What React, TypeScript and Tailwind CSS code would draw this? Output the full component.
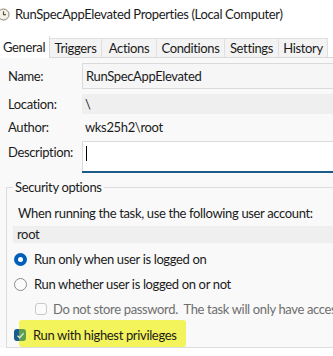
import React from 'react';

const tabs = [
  { label: 'General', w: 'w-[50px]' },
  { label: 'Triggers', w: 'w-[52px]' },
  { label: 'Actions', w: 'w-[55px]' },
  { label: 'Conditions', w: 'w-[68px]' },
  { label: 'Settings', w: 'w-[54px]' },
  { label: 'History', w: 'w-[49px]' },
];

function ClockIcon() {
  return (
    <svg width="13" height="13" viewBox="0 0 13 13" className="shrink-0">
      <circle cx="6.5" cy="6.5" r="5.5" fill="#f4f1e8" stroke="#8a8170" strokeWidth="1" />
      <path d="M6.5 3.2 V6.7 H9" fill="none" stroke="#5b5344" strokeWidth="1.2" />
    </svg>
  );
}

function Radio({ checked }: { checked?: boolean }) {
  if (checked) {
    return (
      <span className="w-[13px] h-[13px] rounded-full bg-[#005fb8] flex items-center justify-center shrink-0">
        <span className="w-[5px] h-[5px] rounded-full bg-white" />
      </span>
    );
  }
  return <span className="w-[13px] h-[13px] rounded-full border border-[#8b8b8b] bg-[#fbfbfb] shrink-0" />;
}

export default function App() {
  return (
    <div className="w-[333px] h-[356px] overflow-hidden bg-white text-[#1b1b1b] font-['Lato','Open_Sans',sans-serif] text-[13px] tracking-[-0.35px] leading-none">
      {/* заголовок окна */}
      <div className="h-[27px] flex items-center gap-[5px] -ml-[3px] pt-[1px]">
        <ClockIcon />
        <span className="whitespace-nowrap">RunSpecAppElevated Properties (Local Computer)</span>
      </div>

      {/* вкладки */}
      <div className="h-[31px] flex items-end border-b border-[#d9d9d9]">
        {tabs.map((t, i) =>
          i === 0 ? (
            <div
              key={t.label}
              className={`h-[22px] pl-[3px] ${t.w} bg-white border-r border-[#d9d9d9] flex items-center -mb-px shrink-0`}
            >
              {t.label}
            </div>
          ) : (
            <div
              key={t.label}
              className={`h-[19px] ${t.w} bg-[#f3f3f3] border-t border-r border-[#e0e0e0] flex items-center justify-center whitespace-nowrap shrink-0`}
            >
              {t.label}
            </div>
          )
        )}
      </div>

      {/* содержимое вкладки */}
      <div className="bg-[#f9f9f9] pt-[5px]">
        <div className="flex items-center h-[26px]">
          <span className="w-[82px] pl-[8px] shrink-0">Name:</span>
          <div className="flex-1 h-full bg-[#f6f6f6] border border-r-0 border-[#dadada] flex items-center pl-[3px] whitespace-nowrap">
            RunSpecAppElevated
          </div>
        </div>

        <div className="flex items-center h-[20px] mt-[5px]">
          <span className="w-[82px] pl-[8px] shrink-0">Location:</span>
          <div className="flex-1 h-full bg-[#efefef] flex items-center pl-[3px]">\</div>
        </div>

        <div className="flex items-center h-[20px] mt-[3px]">
          <span className="w-[82px] pl-[8px] shrink-0">Author:</span>
          <span className="pl-[3px]">wks25h2\root</span>
        </div>

        <div className="flex items-start h-[32px] mt-[4px]">
          <span className="w-[82px] pl-[8px] pt-[5px] shrink-0">Description:</span>
          <div className="flex-1 h-full bg-white border border-r-0 border-b-0 border-[#dadada] relative">
            <div className="absolute left-[3px] top-[4px] w-px h-[15px] bg-black" />
            <div className="absolute left-[-1px] right-0 bottom-0 h-[2px] bg-[#1b5b87]" />
          </div>
        </div>

        {/* группа безопасности */}
        <div className="mt-[14px] ml-[6px] border-t border-l border-b border-[#dcdcdc] h-[161px] relative">
          <span className="absolute left-[6px] -top-[7px] px-[2px] bg-[#f9f9f9] whitespace-nowrap">
            Security options
          </span>
          <div className="pt-[19px] pl-[11px] whitespace-nowrap">
            When running the task, use the following user account:
          </div>
          <div className="mt-[6px] ml-[6px] h-[17px] bg-[#efefef] flex items-center pl-[4px]">root</div>

          <div className="flex items-center gap-[7px] ml-[7px] mt-[9px] h-[14px] whitespace-nowrap">
            <Radio checked />
            <span>Run only when user is logged on</span>
          </div>
          <div className="flex items-center gap-[7px] ml-[7px] mt-[11px] h-[14px] whitespace-nowrap">
            <Radio />
            <span>Run whether user is logged on or not</span>
          </div>
          <div className="flex items-center gap-[6px] ml-[28px] mt-[11px] h-[14px] whitespace-nowrap text-[#6e6e6e]">
            <span className="w-[12px] h-[12px] rounded-[3px] border border-[#c9c9c9] bg-[#fbfbfb] shrink-0" />
            <span>Do not store password.&nbsp; The task will only have access to local resources</span>
          </div>
          <div className="flex items-center mt-[12px] h-[14px] whitespace-nowrap relative">
            <div className="absolute left-[12px] -top-[8px] w-[167px] h-[27px] bg-[#f3f35c] rounded-[3px]" />
            <span className="relative ml-[7px] w-[12px] h-[12px] rounded-[3px] bg-[linear-gradient(90deg,#1c5a92_45%,#5d9d52_45%)] flex items-center justify-center shrink-0">
              <svg width="9" height="9" viewBox="0 0 9 9">
                <path d="M1.5 4.7 L3.6 6.7 L7.6 2.3" fill="none" stroke="#d9ecc8" strokeWidth="1.3" />
              </svg>
            </span>
            <span className="relative ml-[7px]">Run with highest privileges</span>
          </div>
        </div>
      </div>
    </div>
  );
}
